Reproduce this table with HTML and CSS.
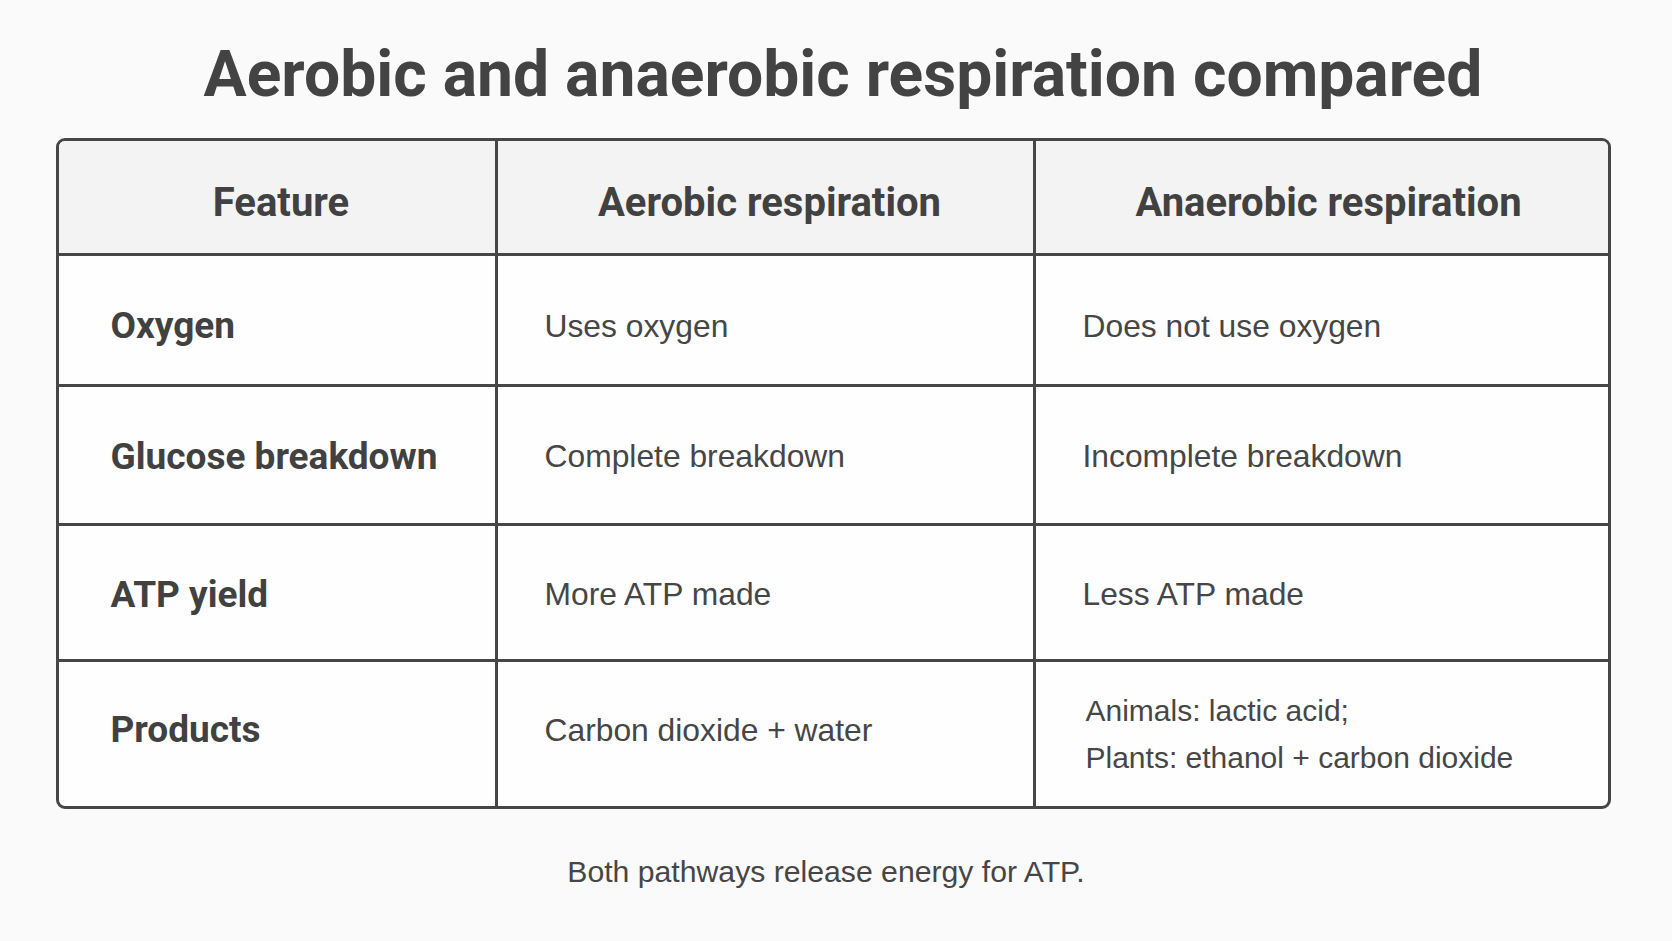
FILE: index.html
```html
<!DOCTYPE html>
<html lang="en">
<head>
<meta charset="utf-8">
<title>Aerobic and anaerobic respiration compared</title>
<link rel="stylesheet" href="styles.css">
</head>
<body>
<main class="page">
  <h1 class="title">Aerobic and anaerobic respiration compared</h1>
  <div class="table">
    <div class="cell head">Feature</div>
    <div class="cell head">Aerobic respiration</div>
    <div class="cell head head-3 last-col">Anaerobic respiration</div>

    <div class="cell label row-1">Oxygen</div>
    <div class="cell text row-1">Uses oxygen</div>
    <div class="cell text row-1 last-col">Does not use oxygen</div>

    <div class="cell label">Glucose breakdown</div>
    <div class="cell text">Complete breakdown</div>
    <div class="cell text last-col">Incomplete breakdown</div>

    <div class="cell label">ATP yield</div>
    <div class="cell text">More ATP made</div>
    <div class="cell text last-col">Less ATP made</div>

    <div class="cell label row-4 last-row">Products</div>
    <div class="cell text row-4 last-row">Carbon dioxide + water</div>
    <div class="cell text two-line last-col last-row">Animals: lactic acid;<br>Plants: ethanol + carbon dioxide</div>
  </div>
  <p class="note">Both pathways release energy for ATP.</p>
</main>
</body>
</html>
```

FILE: styles.css
```css
* {
  box-sizing: border-box;
}

html, body {
  margin: 0;
  padding: 0;
  background: #fafafa;
}

body {
  width: 1672px;
  height: 941px;
  overflow: hidden;
  color: #444444;
  font-family: "Liberation Sans", Arial, sans-serif;
}

.page {
  display: flex;
  flex-direction: column;
  align-items: center;
}

.title {
  margin: 0;
  padding-top: 35px;
  padding-left: 14px;
  font-family: Roboto, "Liberation Sans", sans-serif;
  font-weight: 700;
  font-size: 64.2px;
  line-height: 78px;
  color: #434343;
}

.table {
  margin-top: 25px;
  margin-right: 6px;
  display: grid;
  grid-template-columns: 439px 538px 572px;
  grid-template-rows: 115px 131px 139px 136px 144px;
  border: 3px solid #464646;
  border-radius: 9px;
  overflow: hidden;
  background: #fefefe;
}

.cell {
  display: flex;
  align-items: center;
  border-right: 3px solid #464646;
  border-bottom: 3px solid #464646;
}

.cell.last-col {
  border-right: none;
}

.cell.last-row {
  border-bottom: none;
}

.head {
  justify-content: center;
  background: #f3f3f3;
  font-family: Roboto, "Liberation Sans", sans-serif;
  font-weight: 700;
  font-size: 40px;
  line-height: 48px;
  color: #414141;
  padding-top: 11px;
  padding-left: 9px;
}

.head.head-3 {
  padding-left: 14px;
}

.label {
  padding-left: 52px;
  padding-top: 4px;
  font-family: Roboto, "Liberation Sans", sans-serif;
  font-weight: 700;
  font-size: 37px;
  line-height: 44px;
  color: #414141;
}

.text {
  padding-left: 47px;
  padding-top: 2px;
  font-size: 31.8px;
  line-height: 38px;
  color: #464646;
}

.cell.row-1 {
  padding-top: 11px;
}

.cell.row-4 {
  padding-top: 0;
  padding-bottom: 9px;
}

.text.two-line {
  font-size: 30px;
  line-height: 47px;
  padding-left: 50px;
  padding-top: 0;
}

.note {
  margin: 46px 0 0;
  padding-right: 20px;
  font-size: 30.2px;
  line-height: 34px;
  color: #464646;
}
```
